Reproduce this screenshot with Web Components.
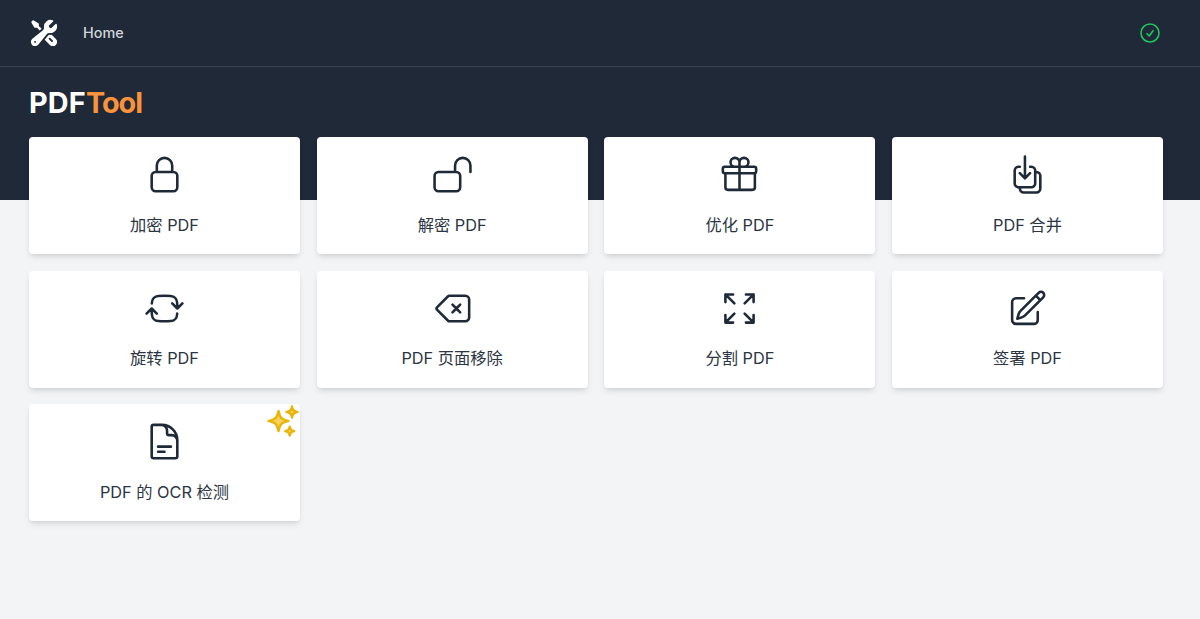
<!DOCTYPE html>
<html lang="zh"><head><meta charset="utf-8"><style>
html,body{margin:0;padding:0;background:#f3f4f6;height:100%;overflow:hidden}
body{font-family:Inter,"Noto Sans CJK SC",sans-serif}
</style></head><body>
<pdf-app></pdf-app>
<template id="card-t"><style>
:host{display:flex;flex-direction:column;align-items:center;background:#fff;border-radius:4px;height:117px;box-sizing:border-box;padding-top:17px;position:relative;box-shadow:0 4px 6px -1px rgba(0,0,0,.1),0 2px 4px -2px rgba(0,0,0,.1);color:#1f2937}
svg.i{width:41px;height:41px;fill:none;stroke:currentColor;stroke-width:1.5;stroke-linecap:round;stroke-linejoin:round;display:block}
.l{margin-top:17.8px;font-size:16.3px;line-height:24px;color:#2b3543;white-space:nowrap}
::slotted([slot=badge]){position:absolute;top:-1px;right:-1px}
</style><svg class="i" viewBox="0 0 24 24"><path></path></svg><div class="l"><slot></slot></div><slot name="badge"></slot></template>
<script>
class ToolCard extends HTMLElement{connectedCallback(){const s=this.attachShadow({mode:'open'});s.appendChild(document.getElementById('card-t').content.cloneNode(true));s.querySelector('path').setAttribute('d',this.getAttribute('icon'));}}
customElements.define('tool-card',ToolCard);
class TopNav extends HTMLElement{constructor(){super();this.attachShadow({mode:'open'}).innerHTML=`<style>
:host{display:flex;align-items:center;height:66px;border-bottom:1px solid #374151;padding:0 38px 0 28.5px;box-sizing:content-box}
svg{display:block}.logo{width:30px;height:30px;fill:#fff}
a{margin-left:24.5px;color:#d1d5db;font-size:14.4px;font-weight:500;line-height:20px}
.sp{flex:1}.ok{width:24px;height:24px;fill:none;stroke:#22c55e;stroke-width:1.6;stroke-linecap:round;stroke-linejoin:round}
</style><svg class="logo" viewBox="0 0 24 24"><path fill-rule="evenodd" clip-rule="evenodd" d="M12 6.75a5.25 5.25 0 0 1 6.775-5.025.75.75 0 0 1 .313 1.248l-3.32 3.319c.063.475.276.934.641 1.299.365.365.824.578 1.3.64l3.318-3.319a.75.75 0 0 1 1.248.313 5.25 5.25 0 0 1-5.472 6.756c-1.018-.086-1.87.1-2.309.634L7.344 21.3A3.298 3.298 0 1 1 2.7 16.657l8.684-7.151c.533-.44.72-1.291.634-2.309A5.342 5.342 0 0 1 12 6.75ZM4.117 19.125a.75.75 0 0 1 .75-.75h.008a.75.75 0 0 1 .75.75v.008a.75.75 0 0 1-.75.75h-.008a.75.75 0 0 1-.75-.75v-.008Z"/><path d="m10.076 8.64-2.201-2.2V4.874a.75.75 0 0 0-.364-.643l-3.75-2.25a.75.75 0 0 0-.916.113l-.75.75a.75.75 0 0 0-.113.916l2.25 3.75a.75.75 0 0 0 .643.364h1.564l2.062 2.062 1.575-1.297Z"/><path fill-rule="evenodd" clip-rule="evenodd" d="m12.556 17.329 4.183 4.182a3.375 3.375 0 0 0 4.773-4.773l-3.306-3.305a6.803 6.803 0 0 1-1.53.043c-.394-.034-.682-.006-.867.042a.589.589 0 0 0-.167.063l-3.086 3.748Zm3.414-1.36a.75.75 0 0 1 1.06 0l1.875 1.876a.75.75 0 1 1-1.06 1.06L15.97 17.03a.75.75 0 0 1 0-1.06Z"/></svg><a>Home</a><span class="sp"></span><svg class="ok" viewBox="0 0 24 24"><path d="M9 12.75 11.25 15 15 9.75M21 12a9 9 0 1 1-18 0 9 9 0 0 1 18 0Z"/></svg>`}}
customElements.define('top-nav',TopNav);
class SparkBadge extends HTMLElement{constructor(){super();this.attachShadow({mode:'open'}).innerHTML=`<style>:host{display:block;width:36px;height:36px}svg{display:block;width:36px;height:36px;fill:#f5d25a;stroke:#eab308;stroke-width:1.5;stroke-linejoin:round;stroke-linecap:round}</style><svg viewBox="0 0 24 24"><path d="M9.813 15.904 9 18.75l-.813-2.846a4.5 4.5 0 0 0-3.09-3.09L2.25 12l2.846-.813a4.5 4.5 0 0 0 3.09-3.09L9 5.25l.813 2.846a4.5 4.5 0 0 0 3.09 3.09L15.75 12l-2.846.813a4.5 4.5 0 0 0-3.09 3.09ZM18.259 8.715 18 9.75l-.259-1.035a3.375 3.375 0 0 0-2.455-2.456L14.25 6l1.036-.259a3.375 3.375 0 0 0 2.455-2.456L18 2.25l.259 1.035a3.375 3.375 0 0 0 2.456 2.456L21.75 6l-1.035.259a3.375 3.375 0 0 0-2.456 2.456ZM16.894 20.567 16.5 21.75l-.394-1.183a2.25 2.25 0 0 0-1.423-1.423L13.5 18.75l1.183-.394a2.25 2.25 0 0 0 1.423-1.423l.394-1.183.394 1.183a2.25 2.25 0 0 0 1.423 1.423l1.183.394-1.183.394a2.25 2.25 0 0 0-1.423 1.423Z"/></svg>`}}
customElements.define('spark-badge',SparkBadge);
class PdfApp extends HTMLElement{constructor(){super();this.attachShadow({mode:'open'}).innerHTML=`<style>
:host{display:block;position:relative;height:619px;background:linear-gradient(#1f2937 200px,#f3f4f6 200px)}
.brand{height:70px;box-sizing:border-box;padding:18px 0 0 29px;font-size:28.8px;line-height:36px;font-weight:700;color:#fff;letter-spacing:.2px}
.brand span{color:#fb923c;letter-spacing:-1px}
.grid{display:grid;grid-template-columns:repeat(4,minmax(0,1fr));gap:16.5px 16.67px;padding:0 37px 0 29px}
</style><top-nav></top-nav><div class="brand">PDF<span>Tool</span></div><div class="grid">
<tool-card icon="M16.5 10.5V6.75a4.5 4.5 0 1 0-9 0v3.75m-.75 11.25h10.5a2.25 2.25 0 0 0 2.25-2.25v-6.75a2.25 2.25 0 0 0-2.25-2.25H6.75a2.25 2.25 0 0 0-2.25 2.25v6.75a2.25 2.25 0 0 0 2.25 2.25Z">加密 PDF</tool-card>
<tool-card icon="M13.5 10.5V6.75a4.5 4.5 0 1 1 9 0v3.75M3.75 21.75h10.5a2.25 2.25 0 0 0 2.25-2.25v-6.75a2.25 2.25 0 0 0-2.25-2.25H3.75a2.25 2.25 0 0 0-2.25 2.25v6.75a2.25 2.25 0 0 0 2.25 2.25Z">解密 PDF</tool-card>
<tool-card icon="M21 11.25v8.25a1.5 1.5 0 0 1-1.5 1.5H5.25a1.5 1.5 0 0 1-1.5-1.5v-8.25M12 4.875A2.625 2.625 0 1 0 9.375 7.5H12m0-2.625V7.5m0-2.625A2.625 2.625 0 1 1 14.625 7.5H12m0 0V21m-8.625-9.75h17.25c.621 0 1.125-.504 1.125-1.125v-1.5c0-.621-.504-1.125-1.125-1.125H3.375c-.621 0-1.125.504-1.125 1.125v1.5c0 .621.504 1.125 1.125 1.125Z">优化 PDF</tool-card>
<tool-card icon="M7.5 7.5h-.75A2.25 2.25 0 0 0 4.5 9.75v7.5a2.25 2.25 0 0 0 2.25 2.25h7.5a2.25 2.25 0 0 0 2.25-2.25v-7.5a2.25 2.25 0 0 0-2.25-2.25h-.75m-6 3.75 3 3m0 0 3-3m-3 3V1.5m6 9h.75a2.25 2.25 0 0 1 2.25 2.25v7.5a2.25 2.25 0 0 1-2.25 2.25h-7.5a2.25 2.25 0 0 1-2.25-2.25v-.75">PDF 合并</tool-card>
<tool-card icon="M19.5 12c0-1.232-.046-2.453-.138-3.662a4.006 4.006 0 0 0-3.7-3.7 48.678 48.678 0 0 0-7.324 0 4.006 4.006 0 0 0-3.7 3.7c-.017.22-.032.441-.046.662M19.5 12l3-3m-3 3-3-3m-12 3c0 1.232.046 2.453.138 3.662a4.006 4.006 0 0 0 3.7 3.7 48.656 48.656 0 0 0 7.324 0 4.006 4.006 0 0 0 3.7-3.7c.017-.22.032-.441.046-.662M4.5 12l3 3m-3-3-3 3">旋转 PDF</tool-card>
<tool-card icon="M12 9.75 14.25 12m0 0 2.25 2.25M14.25 12l2.25-2.25M14.25 12 12 14.25m-2.58 4.92-6.374-6.375a1.125 1.125 0 0 1 0-1.59L9.42 4.83c.21-.211.497-.33.795-.33H19.5a2.25 2.25 0 0 1 2.25 2.25v10.5a2.25 2.25 0 0 1-2.25 2.25h-9.284c-.298 0-.585-.119-.795-.33Z">PDF 页面移除</tool-card>
<tool-card icon="M3.75 3.75v4.5m0-4.5h4.5m-4.5 0L9 9M3.75 20.25v-4.5m0 4.5h4.5m-4.5 0L9 15M20.25 3.75h-4.5m4.5 0v4.5m0-4.5L15 9m5.25 11.25h-4.5m4.5 0v-4.5m0 4.5L15 15">分割 PDF</tool-card>
<tool-card icon="m16.862 4.487 1.687-1.688a1.875 1.875 0 1 1 2.652 2.652L10.582 16.07a4.5 4.5 0 0 1-1.897 1.13L6 18l.8-2.685a4.5 4.5 0 0 1 1.13-1.897l8.932-8.931Zm0 0L19.5 7.125M18 14v4.75A2.25 2.25 0 0 1 15.75 21H5.25A2.25 2.25 0 0 1 3 18.75V8.25A2.25 2.25 0 0 1 5.25 6H10">签署 PDF</tool-card>
<tool-card icon="M19.5 14.25v-2.625a3.375 3.375 0 0 0-3.375-3.375h-1.5A1.125 1.125 0 0 1 13.5 7.125v-1.5a3.375 3.375 0 0 0-3.375-3.375H8.25m0 12.75h7.5m-7.5 3H12M10.5 2.25H5.625c-.621 0-1.125.504-1.125 1.125v17.25c0 .621.504 1.125 1.125 1.125h12.75c.621 0 1.125-.504 1.125-1.125V11.25a9 9 0 0 0-9-9Z">PDF 的 OCR 检测<spark-badge slot="badge"></spark-badge></tool-card>
</div>`}}
customElements.define('pdf-app',PdfApp);
</script>
</body></html>
